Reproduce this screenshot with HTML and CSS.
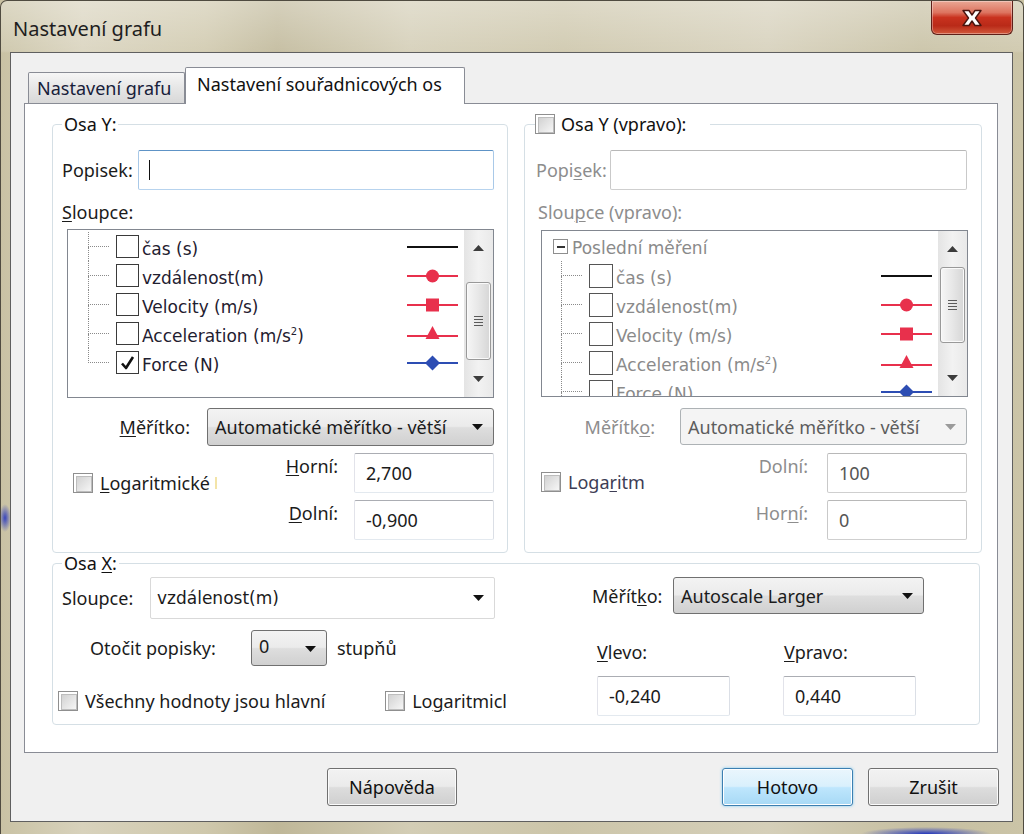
FILE: index.html
```html
<!DOCTYPE html>
<html lang="cs">
<head>
<meta charset="utf-8">
<title>Nastavení grafu</title>
<link rel="stylesheet" href="styles.css">
</head>
<body>
<div class="window">
  <div class="titlebar">
    <div class="title">Nastavení grafu</div>
    <div class="close">
      <svg width="26" height="20" viewBox="0 0 26 20"><polygon points="4,2.5 10,2.5 13,7 16,2.5 22,2.5 16.5,10 22,17.5 16,17.5 13,13 10,17.5 4,17.5 9.5,10" fill="#fff" stroke="#4a1510" stroke-width="1.4" stroke-linejoin="round"/></svg>
    </div>
  </div>
  <div class="client">
    <div class="tabs">
      <div class="tab">Nastavení grafu</div>
      <div class="tab active">Nastavení souřadnicových os</div>
    </div>
    <div class="panel">
      <div class="ygroups">
        <fieldset class="group gy-left">
          <legend>Osa Y:</legend>
          <div class="gbody gbody-left">
            <div class="row r-popisek">
              <span class="lbl">Popisek:</span>
              <div class="input focus wide-l"><span class="caret"></span></div>
            </div>
            <div class="lbl r-sl"><u>S</u>loupce:</div>
            <div class="tree tree-left">
              <div class="items">
                <div class="trow">
                  <div class="branch"><i class="up"></i><i class="down"></i></div>
                  <span class="tcb"></span><span class="tlabel">čas (s)</span>
                  <svg class="mk" width="51" height="18" viewBox="0 0 51 18"><line x1="0" y1="9" x2="51" y2="9" stroke="#111" stroke-width="2"/></svg>
                </div>
                <div class="trow">
                  <div class="branch"><i class="up"></i><i class="down"></i></div>
                  <span class="tcb"></span><span class="tlabel">vzdálenost(m)</span>
                  <svg class="mk" width="51" height="18" viewBox="0 0 51 18"><line x1="0" y1="9" x2="51" y2="9" stroke="#e8304c" stroke-width="2"/><circle cx="25.5" cy="9" r="6.5" fill="#e8304c"/></svg>
                </div>
                <div class="trow">
                  <div class="branch"><i class="up"></i><i class="down"></i></div>
                  <span class="tcb"></span><span class="tlabel">Velocity (m/s)</span>
                  <svg class="mk" width="51" height="18" viewBox="0 0 51 18"><line x1="0" y1="9" x2="51" y2="9" stroke="#e8304c" stroke-width="2"/><rect x="19" y="2.5" width="13" height="13" fill="#e8304c"/></svg>
                </div>
                <div class="trow">
                  <div class="branch"><i class="up"></i><i class="down"></i></div>
                  <span class="tcb"></span><span class="tlabel">Acceleration (m/s<sup>2</sup>)</span>
                  <svg class="mk" width="51" height="18" viewBox="0 0 51 18"><line x1="0" y1="11" x2="51" y2="11" stroke="#e8304c" stroke-width="2"/><polygon points="18.5,14 32.5,14 25.5,1" fill="#e8304c"/></svg>
                </div>
                <div class="trow last">
                  <div class="branch"><i class="up"></i><i class="down"></i></div>
                  <span class="tcb checked"><svg width="21" height="21" viewBox="0 0 21 21"><path d="M5 11.5 L9 16 L16 5" fill="none" stroke="#111" stroke-width="2.6" stroke-linejoin="round"/></svg></span><span class="tlabel">Force (N)</span>
                  <svg class="mk" width="51" height="18" viewBox="0 0 51 18"><line x1="0" y1="9" x2="51" y2="9" stroke="#2d4db3" stroke-width="2"/><polygon points="25.5,1.5 33,9 25.5,16.5 18,9" fill="#2d4db3"/></svg>
                </div>
              </div>
              <div class="sbar">
                <div class="sb-arrow"><svg width="11" height="6" viewBox="0 0 11 6"><polygon points="0,6 11,6 5.5,0" fill="#3c3c3c"/></svg></div>
                <div class="sb-track"><div class="thumb thumb-left"><div class="grip"></div></div></div>
                <div class="sb-arrow"><svg width="11" height="6" viewBox="0 0 11 6"><polygon points="0,0 11,0 5.5,6" fill="#3c3c3c"/></svg></div>
              </div>
            </div>
            <div class="row r-meritko">
              <span class="lbl"><u>M</u>ěřítko:</span>
              <div class="select sel-y"><span class="val">Automatické měřítko - větší</span><svg width="11" height="6" viewBox="0 0 11 6"><polygon points="0,0 11,0 5.5,6" fill="#111"/></svg></div>
            </div>
            <div class="limits">
              <div class="chk chk-left"><span class="cb"></span><span><u>L</u>ogaritmické</span><span class="mark"></span></div>
              <div class="lims">
                <div class="lim"><span class="lbl"><u>H</u>orní:</span><div class="input num">2,700</div></div>
                <div class="lim"><span class="lbl"><u>D</u>olní:</span><div class="input num">-0,900</div></div>
              </div>
            </div>
          </div>
        </fieldset>

        <fieldset class="group gy-right">
          <legend class="legend-chk"><span class="lgd"><span class="cb"></span><span class="lgd-text">Osa Y (vpravo):</span></span></legend>
          <div class="gbody gbody-right disabled">
            <div class="row r-popisek r2">
              <span class="lbl">Popi<u>s</u>ek:</span>
              <div class="input dis wide-r"></div>
            </div>
            <div class="lbl r-sl r2-sl">Slou<u>p</u>ce (vpravo):</div>
            <div class="tree tree-right">
              <div class="items">
                <div class="trow root">
                  <span class="expander"><i></i></span><span class="tlabel">Poslední měření</span>
                </div>
                <div class="trow">
                  <div class="branch"><i class="up"></i><i class="down"></i></div>
                  <span class="tcb"></span><span class="tlabel">čas (s)</span>
                  <svg class="mk" width="51" height="18" viewBox="0 0 51 18"><line x1="0" y1="9" x2="51" y2="9" stroke="#111" stroke-width="2"/></svg>
                </div>
                <div class="trow">
                  <div class="branch"><i class="up"></i><i class="down"></i></div>
                  <span class="tcb"></span><span class="tlabel">vzdálenost(m)</span>
                  <svg class="mk" width="51" height="18" viewBox="0 0 51 18"><line x1="0" y1="9" x2="51" y2="9" stroke="#e8304c" stroke-width="2"/><circle cx="25.5" cy="9" r="6.5" fill="#e8304c"/></svg>
                </div>
                <div class="trow">
                  <div class="branch"><i class="up"></i><i class="down"></i></div>
                  <span class="tcb"></span><span class="tlabel">Velocity (m/s)</span>
                  <svg class="mk" width="51" height="18" viewBox="0 0 51 18"><line x1="0" y1="9" x2="51" y2="9" stroke="#e8304c" stroke-width="2"/><rect x="19" y="2.5" width="13" height="13" fill="#e8304c"/></svg>
                </div>
                <div class="trow">
                  <div class="branch"><i class="up"></i><i class="down"></i></div>
                  <span class="tcb"></span><span class="tlabel">Acceleration (m/s<sup>2</sup>)</span>
                  <svg class="mk" width="51" height="18" viewBox="0 0 51 18"><line x1="0" y1="11" x2="51" y2="11" stroke="#e8304c" stroke-width="2"/><polygon points="18.5,14 32.5,14 25.5,1" fill="#e8304c"/></svg>
                </div>
                <div class="trow">
                  <div class="branch"><i class="up"></i><i class="down"></i></div>
                  <span class="tcb"></span><span class="tlabel">Force (N)</span>
                  <svg class="mk" width="51" height="18" viewBox="0 0 51 18"><line x1="0" y1="9" x2="51" y2="9" stroke="#2d4db3" stroke-width="2"/><polygon points="25.5,1.5 33,9 25.5,16.5 18,9" fill="#2d4db3"/></svg>
                </div>
              </div>
              <div class="sbar">
                <div class="sb-arrow"><svg width="11" height="6" viewBox="0 0 11 6"><polygon points="0,6 11,6 5.5,0" fill="#3c3c3c"/></svg></div>
                <div class="sb-track"><div class="thumb thumb-right"><div class="grip"></div></div></div>
                <div class="sb-arrow"><svg width="11" height="6" viewBox="0 0 11 6"><polygon points="0,0 11,0 5.5,6" fill="#3c3c3c"/></svg></div>
              </div>
            </div>
            <div class="row r-meritko r2-meritko">
              <span class="lbl">Měřítk<u>o</u>:</span>
              <div class="select dis sel-y"><span class="val">Automatické měřítko - větší</span><svg width="11" height="6" viewBox="0 0 11 6"><polygon points="0,0 11,0 5.5,6" fill="#9a9a9a"/></svg></div>
            </div>
            <div class="limits">
              <div class="chk chk-right"><span class="cb"></span><span class="dark">Loga<u>r</u>itm</span></div>
              <div class="lims lims-right">
                <div class="lim"><span class="lbl">Dolní:</span><div class="input num dis">100</div></div>
                <div class="lim"><span class="lbl">Hor<u>n</u>í:</span><div class="input num dis">0</div></div>
              </div>
            </div>
          </div>
        </fieldset>
      </div>

      <fieldset class="group gx">
        <legend>Osa <u>X</u>:</legend>
        <div class="xgrid">
          <div class="xcol xleft">
            <div class="xrow x1">
              <span class="lbl xl-sl">Sloupce:</span>
              <div class="select white sel-x"><span class="val tree-font">vzdálenost(m)</span><svg width="11" height="6" viewBox="0 0 11 6"><polygon points="0,0 11,0 5.5,6" fill="#111"/></svg></div>
            </div>
            <div class="xrow x2">
              <span class="lbl xl-rot">Otočit popisky:</span>
              <div class="select sel-deg"><span class="val">0</span><svg width="11" height="6" viewBox="0 0 11 6"><polygon points="0,0 11,0 5.5,6" fill="#111"/></svg></div>
              <span class="lbl deg">stupňů</span>
            </div>
            <div class="xrow x3">
              <div class="chk chk-all"><span class="cb"></span><span>Všechny hodnoty jsou hlavní</span></div>
              <div class="chk"><span class="cb"></span><span>Lo<u>g</u>aritmicl</span></div>
            </div>
          </div>
          <div class="xcol xright">
            <div class="xrow x1 xr1">
              <span class="lbl xr-m">Měřít<u>k</u>o:</span>
              <div class="select sel-auto"><span class="val">Autoscale Larger</span><svg width="11" height="6" viewBox="0 0 11 6"><polygon points="0,0 11,0 5.5,6" fill="#111"/></svg></div>
            </div>
            <div class="xrow xr2">
              <span class="lbl xr-lv"><u>V</u>levo:</span>
              <span class="lbl"><u>V</u>pravo:</span>
            </div>
            <div class="xrow xr3">
              <div class="input num xin">-0,240</div>
              <div class="input num xin">0,440</div>
            </div>
          </div>
        </div>
      </fieldset>
    </div>
    <div class="buttons">
      <div class="btn btn-help">Nápověda</div>
      <div class="btn btn-ok">Hotovo</div>
      <div class="btn btn-cancel">Zrušit</div>
    </div>
  </div>
</div>
</body>
</html>
```

FILE: styles.css
```css
* { box-sizing: border-box; }
html, body { margin: 0; padding: 0; }
body {
  width: 1024px;
  height: 834px;
  overflow: hidden;
  background: #c9c1a2;
  font-family: "Noto Sans", "Open Sans", "DejaVu Sans", sans-serif;
  font-size: 18px;
  color: #1b1b1b;
}
u { text-decoration: underline; text-underline-offset: 2px; text-decoration-thickness: 1px; }

.window {
  width: 1024px;
  height: 834px;
  display: flex;
  flex-direction: column;
  border: 1px solid #4f4b40;
  border-bottom: none;
  border-radius: 7px 7px 0 0;
  overflow: hidden;
  background:
    radial-gradient(65px 7px at 925px 833px, rgba(35,55,190,1), rgba(35,55,190,0) 100%),
    radial-gradient(6px 14px at 4px 517px, rgba(40,55,190,0.9), rgba(40,55,190,0) 100%),
    linear-gradient(180deg, rgba(255,255,255,0.35) 0, rgba(255,255,255,0.12) 50px, rgba(0,0,0,0) 52px),
    linear-gradient(90deg, #c9c2a4 0%, #d8d2bc 8%, #cfc8ac 20%, #bfb798 27%, #d3cdb5 40%, #ccc5a9 55%, #d5cfb9 75%, #c6bfa1 90%, #cbc4a7 100%);
}

.titlebar { height: 51px; flex: none; display: flex; align-items: flex-start; }
.title { margin: 14px 0 0 12px; font-size: 20px; line-height: 28px; color: #1e1e1e; }
.close {
  margin-left: auto;
  margin-right: 10px;
  width: 82px;
  height: 34px;
  border: 1px solid #5e2019;
  border-top: none;
  border-radius: 0 0 6px 6px;
  background: linear-gradient(180deg, #e9a795 0%, #dd735f 35%, #c9321f 50%, #b92a18 75%, #d25a3c 100%);
  box-shadow: inset 0 0 0 1px rgba(255,255,255,0.35);
  display: flex;
  align-items: center;
  justify-content: center;
}

.client {
  flex: none;
  margin-left: 9px;
  width: 1003px;
  height: 770px;
  border: 1px solid #5f5f5f;
  background: #f0f0f0;
  padding: 14px 13px 0 13px;
  display: flex;
  flex-direction: column;
}

.tabs {
  display: flex;
  align-items: flex-end;
  height: 37px;
  margin-bottom: -1px;
  padding-left: 4px;
  position: relative;
  z-index: 1;
  flex: none;
}
.tab {
  height: 31px;
  margin-bottom: 1px;
  width: 157px;
  border: 1px solid #898c95;
  border-bottom: none;
  border-radius: 2px 2px 0 0;
  background: linear-gradient(#f6f6f6, #e6e6e6 50%, #d8d8d8);
  padding-left: 8px;
  display: flex;
  align-items: center;
  color: #17203a;
  white-space: nowrap;
}
.tab.active {
  height: 37px;
  margin-bottom: 0;
  width: 280px;
  background: #fff;
  padding: 4px 0 0 11px;
  align-items: flex-start;
  line-height: 24px;
  color: #111;
}

.panel {
  flex: none;
  width: 974px;
  height: 650px;
  border: 1px solid #898c95;
  background: #fff;
  padding: 10px 15px 0 27px;
}

.ygroups { display: flex; gap: 16px; height: 439px; }
fieldset.group {
  margin: 0;
  padding: 0;
  border: 1px solid #d5dfe5;
  border-radius: 4px;
  min-width: 0;
}
legend {
  padding: 0 2px;
  margin-left: 9px;
  height: 20px;
  line-height: 20px;
  color: #111;
}
.gy-left { width: 456px; }
.gy-right { width: 458px; }

.lbl { white-space: nowrap; line-height: 22px; }
.row { display: flex; align-items: center; }

.gbody-left { padding: 0 13px 0 9px; }
.gbody-right { padding: 0 14px 0 11px; }

.r-popisek { margin-top: 16px; height: 40px; }
.input {
  background: #fff;
  border: 1px solid;
  border-color: #abadb3 #dbdfe6 #e3e9ef #e2e3ea;
  border-radius: 2px;
  height: 40px;
  display: flex;
  align-items: center;
  padding-left: 11px;
  white-space: nowrap;
}
.input.focus { border-color: #5e93c6 #a9c9e8 #b7d3ee #a9c9e8; }
.input.dis { border-color: #b8b8b8 #c9c9c9 #cfcfcf #c9c9c9; color: #555; }
.wide-l { margin-left: auto; width: 356px; }
.wide-r { margin-left: auto; width: 357px; }
.caret { width: 1px; height: 20px; background: #111; margin-left: -1px; }

.r-sl { margin-top: 11px; }
.r2-sl { padding-left: 2px; }

.tree {
  display: flex;
  border: 1px solid #828790;
  background: #fff;
  width: 427px;
  overflow: hidden;
  margin-left: 5px;
}
.tree-left { margin-top: 6px; height: 169px; }
.tree-right { margin-top: 7px; height: 167px; }
.items {
  flex: 1;
  min-width: 0;
  font-family: "DejaVu Sans", Verdana, sans-serif;
  font-size: 17px;
  color: #1f2030;
  overflow: hidden;
}
.tree-left .items { padding-top: 2px; }
.tree-right .items { padding-top: 1px; }
.trow { display: flex; align-items: center; height: 29px; padding-right: 6px; flex: none; }
.branch { width: 28px; align-self: stretch; display: flex; flex-direction: column; margin-left: 20px; flex: none; }
.tree-right .branch { margin-left: 19px; }
.branch .up { height: 15px; width: 21px; border-left: 1px dotted #8a8a8a; border-bottom: 1px dotted #8a8a8a; }
.branch .down { flex: 1; border-left: 1px dotted #8a8a8a; }
.trow.last .branch .down { border-left: none; }
.tcb { width: 23px; height: 23px; border: 1px solid #3a3a3a; background: #fff; flex: none; display: flex; align-items: center; justify-content: center; }
.tree-right .tcb { width: 24px; height: 24px; border-color: #555; }
.tlabel { margin-left: 3px; white-space: nowrap; line-height: 23px; padding-top: 5px; }
.tlabel sup { font-size: 10px; vertical-align: 7px; line-height: 0; }
.mk { margin-left: auto; flex: none; }
.root { padding-left: 11px; }
.expander {
  width: 15px; height: 15px; border: 1px solid #8e8e8e; background: #fff;
  display: flex; align-items: center; justify-content: center; flex: none;
}
.expander i { width: 8px; height: 2px; background: #333; display: block; }
.root .tlabel { margin-left: 4px; padding-top: 4px; }
.disabled .items { color: #8a8a8a; }

.sbar {
  width: 29px;
  flex: none;
  display: flex;
  flex-direction: column;
  align-items: center;
  background: linear-gradient(90deg, #e4e4e4, #f2f2f2 50%, #e9e9e9);
}
.sb-arrow { height: 36px; width: 100%; display: flex; align-items: center; justify-content: center; flex: none; }
.sb-track { flex: 1; width: 100%; display: flex; flex-direction: column; align-items: center; }
.thumb {
  width: 25px;
  border: 1px solid #999;
  border-radius: 3px;
  background: linear-gradient(90deg, #f6f6f6, #e7e7e7 50%, #d6d6d6);
  box-shadow: inset 0 0 0 1px #fafafa;
  display: flex;
  align-items: center;
  justify-content: center;
}
.thumb-left { margin-top: 16px; height: 78px; }
.thumb-right { margin-top: 0; height: 76px; }
.grip { width: 9px; height: 10px; background: repeating-linear-gradient(180deg, #5a5a5a 0 1px, transparent 1px 3px); }

.select {
  display: flex;
  align-items: center;
  border: 1px solid #707070;
  border-radius: 3px;
  background: linear-gradient(#f3f3f3 0%, #ebebeb 48%, #dedede 52%, #d0d0d0 100%);
  padding: 0 10px 0 7px;
  white-space: nowrap;
}
.select .val { flex: 1; }
.select.dis { border-color: #adb2b5; background: #f4f4f4; color: #5d5d5d; }
.select.white { background: #fff; border-color: #d9d9d9; border-radius: 2px; }
.r-meritko { margin-top: 10px; height: 38px; justify-content: flex-end; }
.r-meritko .lbl { margin-right: 17px; }
.r2-meritko { margin-top: 11px; height: 37px; }
.r2-meritko .lbl { margin-right: 25px; }
.sel-y { width: 287px; height: 100%; }

.limits { display: flex; margin-top: 7px; }
.gbody-right .limits { margin-top: 8px; }
.chk { display: flex; align-items: center; gap: 7px; white-space: nowrap; }
.chk-left { margin: 18px 0 0 11px; align-self: flex-start; }
.chk-right { margin: 17px 0 0 5px; align-self: flex-start; }
.mark { width: 2px; height: 12px; background: #f3e4a8; margin-left: -2px; }
.cb {
  width: 20px;
  height: 20px;
  border: 1px solid #8f8f8f;
  background: #fff;
  padding: 2px;
  flex: none;
}
.cb::before {
  content: "";
  display: block;
  width: 100%;
  height: 100%;
  border: 1px solid #bdbdbd;
  background: linear-gradient(135deg, #d2d2d2, #f6f6f6);
}
.lims { margin-left: auto; display: flex; flex-direction: column; gap: 7px; }
.lim { display: flex; align-items: flex-start; justify-content: flex-end; }
.lim .lbl { margin: 2px 16px 0 0; }
.lims-right .lbl { margin-right: 19px; }
.lim .input { width: 140px; }
.input.num { padding-left: 11px; }

.disabled .lbl { color: #8d8d8d; }
.disabled .chk .dark { color: #3d3d55; }

.legend-chk { margin-left: 10px; padding: 0 24px 0 0; }
.lgd { display: flex; align-items: center; gap: 6px; height: 20px; }

.gx { margin-top: 8px; width: 928px; height: 172px; }
.gx legend { margin-left: 9px; }
.xgrid { display: grid; grid-template-columns: 449px 1fr; padding-left: 5px; }
.xcol { display: flex; flex-direction: column; }
.xrow { display: flex; align-items: center; }
.x1 { margin-top: 4px; height: 42px; }
.xl-sl { width: 92px; padding-left: 4px; }
.sel-x { width: 345px; height: 42px; padding-left: 6px; }
.tree-font { font-family: "DejaVu Sans", Verdana, sans-serif; font-size: 17px; }
.x2 { margin-top: 11px; height: 36px; }
.xl-rot { width: 193px; padding-left: 32px; }
.sel-deg { width: 76px; height: 36px; align-items: flex-start; padding-top: 3px; }
.sel-deg svg { margin-top: 12px; }
.deg { margin-left: 10px; }
.x3 { margin-top: 24px; height: 22px; }
.chk-all { width: 330px; }
.xr1 { height: 37px; padding-left: 85px; }
.xr-m { width: 81px; }
.sel-auto { width: 251px; height: 37px; }
.xr2 { margin-top: 27px; height: 22px; padding-left: 90px; }
.xr-lv { width: 187px; }
.xr3 { margin-top: 13px; padding-left: 90px; gap: 53px; }
.xin { width: 133px; }

.buttons {
  flex: none;
  display: flex;
  margin-top: 15px;
  height: 38px;
  padding: 0 0 0 303px;
}
.btn {
  height: 38px;
  width: 131px;
  display: flex;
  align-items: center;
  justify-content: center;
  border: 1px solid #707070;
  border-radius: 3px;
  background: linear-gradient(#f2f2f2 0%, #ebebeb 48%, #dddddd 52%, #cfcfcf 100%);
  box-shadow: inset 0 0 0 1px #fbfbfb;
  color: #111;
}
.btn-help { width: 130px; }
.btn-ok {
  margin-left: auto;
  border-color: #3c7fb1;
  background: linear-gradient(#eaf6fd 0%, #d9f0fc 48%, #bee6fd 52%, #a7d9f5 100%);
  box-shadow: inset 0 0 0 1px #fff, 0 0 3px #7bc8f0;
}
.btn-cancel { margin-left: 15px; }
```
